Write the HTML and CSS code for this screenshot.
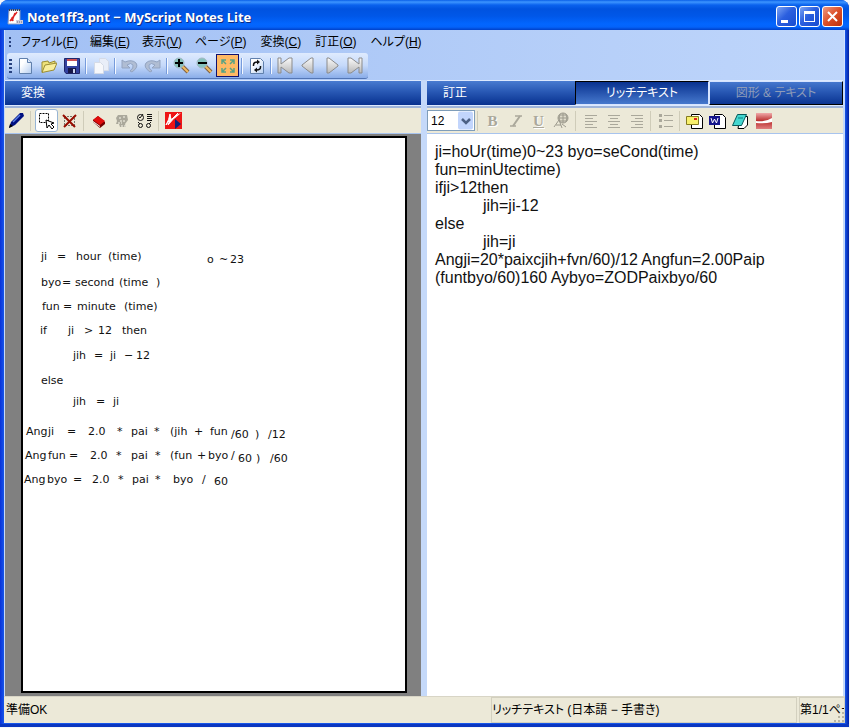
FILE: index.html
```html
<!DOCTYPE html>
<html lang="ja">
<head>
<meta charset="utf-8">
<title>Note1ff3.pnt - MyScript Notes Lite</title>
<link rel="stylesheet" href="styles.css">
</head>
<body>
<div class="window">
  <header class="titlebar">
    <svg class="app-icon" width="16" height="16" viewBox="0 0 16 16"><path d="M2 1h11v14H1z" fill="#fff" stroke="#8a9bc0"/><path d="M2 1h11" stroke="#444" stroke-dasharray="1 1" stroke-width="2"/><path d="M3 12L10 3M5 8l1 4M8 4l-3 8" stroke="#d22" stroke-width="1.5" fill="none"/><path d="M9 11h7v4H9z" fill="#ccd"/><path d="M10 13h5" stroke="#667" stroke-dasharray="1 1"/></svg>
    <h1 class="title">Note1ff3.pnt − MyScript Notes Lite</h1>
    <div class="controls">
      <button class="control" aria-label="最小化"><svg width="19" height="19"><path d="M4 13h7v3H4z" fill="#fff"/></svg></button>
      <button class="control" aria-label="最大化"><svg width="19" height="19"><path d="M4 4h11v11H4zM5 7v7h9V7z" fill="#fff" fill-rule="evenodd"/></svg></button>
      <button class="control close" aria-label="閉じる"><svg width="19" height="19"><path d="M5 5l9 9M14 5l-9 9" stroke="#fff" stroke-width="2"/></svg></button>
    </div>
  </header>

  <nav class="menubar">
    <span class="grip"></span>
    <button class="menu">ファイル(<u>F</u>)</button>
    <button class="menu">編集(<u>E</u>)</button>
    <button class="menu">表示(<u>V</u>)</button>
    <button class="menu">ページ(<u>P</u>)</button>
    <button class="menu">変換(<u>C</u>)</button>
    <button class="menu">訂正(<u>O</u>)</button>
    <button class="menu">ヘルプ(<u>H</u>)</button>
  </nav>

  <div class="toolbar-row">
    <div class="toolbar main-tools">
      <span class="grip"></span>
      <button class="tool" aria-label="新規"><svg width="16" height="16"><defs><linearGradient id="paper" x2="1" y2="1"><stop offset=".3" stop-color="#fff"/><stop offset="1" stop-color="#b4cdf0"/></linearGradient><linearGradient id="metal" x2="0" y2="1"><stop stop-color="#fafafa"/><stop offset="1" stop-color="#b9b9b9"/></linearGradient><linearGradient id="redfade" x2="0" y2="1"><stop stop-color="#f0aaaa"/><stop offset=".5" stop-color="#b92c2c"/><stop offset="1" stop-color="#e08080"/></linearGradient></defs><path d="M1.500.5h8l4 4v11h-12z" fill="url(#paper)" stroke="#6080ad"/><path d="M9.500.5v4h4" fill="#dce8fa" stroke="#6080ad"/></svg></button>
      <button class="tool" aria-label="開く"><svg width="16" height="16"><path d="M1 14V4l6-1 1 2 6-2v4" fill="#eee27a" stroke="#9b8d32"/><path d="M1 14.500L4 7l12-2-3 7z" fill="#f8ee9c" stroke="#9b8d32"/></svg></button>
      <button class="tool" aria-label="保存"><svg width="16" height="16"><path d="M.5.5h15v15H2l-1.500-2z" fill="#3342a0" stroke="#20276b"/><path d="M3 1h10v7H3z" fill="#fff"/><path d="M3 1h10v2H3z" fill="#cf5054"/><path d="M4 10h8v5H4z" fill="#181848"/><path d="M9 11h2v4H9z" fill="#ccd4f0"/></svg></button>
      <span class="sep"></span>
      <button class="tool" aria-label="コピー"><svg width="16" height="16"><path d="M6.500.5h6l3 3v9h-9z" fill="#e9eef8" stroke="#d5dbe7"/><path d="M1.500 4.500h6l3 3v8h-9z" fill="#f7f8fb" stroke="#d5dbe7"/></svg></button>
      <span class="sep"></span>
      <button class="tool" aria-label="元に戻す"><svg width="17" height="16"><path d="M1 2v8h8L6 7q4-3 6 0 1 3-3 6l2 1q7-5 4-9-4-4-11-1z" fill="#b0bdd3" stroke="#92a3c1"/></svg></button>
      <button class="tool" aria-label="やり直し"><svg width="17" height="16"><path d="M16 2v8H8l3-3q-4-3-6 0-1 3 3 6l-2 1Q-1 9 2 5q4-4 11-1z" fill="#b0bdd3" stroke="#92a3c1"/></svg></button>
      <span class="sep"></span>
      <button class="tool" aria-label="拡大"><svg width="17" height="17"><path d="M9 9l6 6" stroke="#806040" stroke-width="4"/><path d="M9 9l6 6" stroke="#f0bb60" stroke-width="2"/><circle cx="6" cy="6" r="5" fill="#86c3bd" stroke="#a3b9c3"/><path d="M6 2v8M2 6h8" stroke="#000" stroke-width="2"/></svg></button>
      <button class="tool" aria-label="縮小"><svg width="17" height="17"><path d="M9 9l6 6" stroke="#806040" stroke-width="4"/><path d="M9 9l6 6" stroke="#f0bb60" stroke-width="2"/><circle cx="6" cy="6" r="5" fill="#86c3bd" stroke="#a3b9c3"/><path d="M2 6h9" stroke="#000" stroke-width="2"/></svg></button>
      <button class="tool checked" aria-label="全体表示"><svg width="16" height="16"><path d="M6 6L2 2m0 4V2h4M10 6l4-4m-4 0h4v4M6 10l-4 4m0-4v4h4M10 10l4 4m-4 0h4v-4" fill="none" stroke="#58a284" stroke-width="1.500"/></svg></button>
      <span class="sep"></span>
      <button class="tool" aria-label="更新"><svg width="16" height="16"><path d="M1.500.5h10l3 3v12h-13z" fill="url(#paper)" stroke="#6080ad"/><path d="M4.500 8V7q0-3 4-3M11.500 8v1q0 3-4 3" fill="none" stroke="#111" stroke-width="1.500"/><path d="M8 1.500l3 2.500-3 2.500zM8 9.500v5l-3-2.500z" fill="#111"/></svg></button>
      <span class="sep"></span>
      <button class="tool" aria-label="先頭"><svg width="17" height="17"><path d="M1 1h3v6l8-6h3v15h-3l-8-6v6H1z" fill="url(#metal)" stroke="#8b8b8b"/></svg></button>
      <button class="tool" aria-label="前へ"><svg width="17" height="17"><path d="M13 1v15h-2L2 9V8l9-7z" fill="url(#metal)" stroke="#8b8b8b"/></svg></button>
      <button class="tool" aria-label="次へ"><svg width="17" height="17"><path d="M4 1v15h2l9-7V8L6 1z" fill="url(#metal)" stroke="#8b8b8b"/></svg></button>
      <button class="tool" aria-label="最後"><svg width="17" height="17"><path d="M16 1h-3v6L5 1H2v15h3l8-6v6h3z" fill="url(#metal)" stroke="#8b8b8b"/></svg></button>
    </div>
  </div>

  <main class="panes">
    <section class="pane">
      <div class="pane-head"><h2 class="pane-title">変換</h2></div>
      <div class="toolbar pane-tools">
        <button class="tool" aria-label="ペン"><svg width="17" height="17"><path d="M1 16l2-6 9-9h3l1 3-9 9z" fill="#001080"/><path d="M5 10l7-7" stroke="#5c82e8" stroke-width="1.500"/><path d="M1 16l1-4 3 2z" fill="#000"/></svg></button>
        <span class="sep wide"></span>
        <button class="tool selected" aria-label="選択"><svg width="17" height="17"><path d="M1.500 1.500h9v9h-9z" fill="none" stroke="#000" stroke-dasharray="2 1"/><path d="M8 8l8 3-3 1 3 3-2 2-3-4-2 3z" fill="#fff" stroke="#000"/></svg></button>
        <button class="tool" aria-label="選択解除"><svg width="16" height="16"><path d="M2.500 3.500h10v9h-10z" fill="none" stroke="#000" stroke-dasharray="1 2"/><path d="M1 2l12 12M14 2L2 14" stroke="#970d00" stroke-width="2"/></svg></button>
        <span class="sep"></span>
        <button class="tool" aria-label="消しゴム"><svg width="16" height="16"><path d="M2 7l5-4 7 6v2l-5 4-7-6z" fill="#700"/><path d="M2 7l5-4 7 5-5 4z" fill="#e00d0d"/><path d="M2 8l7 5v1L2 9z" fill="#fff"/></svg></button>
        <button class="tool" aria-label="認識"><svg width="16" height="16"><path d="M4 2h9l1 5-3 4 1 3H6l-1-3H2l1-3-1-3z" fill="#aaa89b"/><path d="M5 5h2m2-1h3M6 8h6M4 10h4M7 13h5" stroke="#f8f6e9" stroke-dasharray="2 1"/></svg></button>
        <button class="tool" aria-label="一覧"><svg width="17" height="16"><g fill="none" stroke="#111"><circle cx="4.500" cy="4.500" r="3"/><path d="M3 4l1 1 3-4M11 1.500h5M11 3.500h5M11 5.500h5M11 7.500h5"/><circle cx="4.500" cy="12.500" r="2"/><circle cx="12.500" cy="12.500" r="2"/><path d="M2 9l2 2M15 9l-2 2"/></g></svg></button>
        <span class="sep"></span>
        <button class="tool" aria-label="変換実行"><svg width="17" height="17"><path d="M0 0h17v17H0z" fill="#ee1515"/><path d="M1 13Q4 8 5 2l1 6 7-7-3 4-7 8 3-7z" fill="#fff" stroke="#fff"/><path d="M16 1l-5 2-2 4z" fill="#fff"/><path d="M10 7l6 5-6 5z" fill="#102078"/></svg></button>
      </div>
      <div class="desk">
        <svg class="page" role="img" aria-label="手書きノート">
          <g class="ink" transform="translate(-23 -138)">
            <text y="260"><tspan x="41">ji</tspan> <tspan x="57">=</tspan> <tspan x="76">hour</tspan> <tspan x="108">(time)</tspan></text>
            <text y="263"><tspan x="207">o</tspan> <tspan x="219">~</tspan><tspan x="230">23</tspan></text>
            <text y="286"><tspan x="41">byo</tspan> <tspan x="62">=</tspan> <tspan x="75">second</tspan> <tspan x="119">(time</tspan> <tspan x="156">)</tspan></text>
            <text y="310"><tspan x="42">fun</tspan> <tspan x="63">=</tspan> <tspan x="77">minute</tspan> <tspan x="124">(time)</tspan></text>
            <text y="334"><tspan x="40">if</tspan> <tspan x="68">ji</tspan> <tspan x="84">&gt;</tspan> <tspan x="98">12</tspan> <tspan x="122">then</tspan></text>
            <text y="359"><tspan x="73">jih</tspan> <tspan x="94">=</tspan> <tspan x="110">ji</tspan> <tspan x="124">−</tspan> <tspan x="136">12</tspan></text>
            <text y="384"><tspan x="41">else</tspan></text>
            <text y="405"><tspan x="73">jih</tspan> <tspan x="96">=</tspan> <tspan x="113">ji</tspan></text>
            <text y="435"><tspan x="26">Ang</tspan><tspan x="48">ji</tspan> <tspan x="67">=</tspan> <tspan x="88">2.0</tspan> <tspan x="117">*</tspan> <tspan x="131">pai</tspan> <tspan x="154">*</tspan> <tspan x="170">(jih</tspan> <tspan x="194">+</tspan> <tspan x="210">fun</tspan> <tspan x="231" y="438">/60</tspan> <tspan x="255">)</tspan> <tspan x="268">/12</tspan></text>
            <text y="459"><tspan x="25">Ang</tspan> <tspan x="48">fun</tspan> <tspan x="69">=</tspan> <tspan x="90">2.0</tspan> <tspan x="116">*</tspan> <tspan x="131">pai</tspan> <tspan x="155">*</tspan> <tspan x="170">(fun</tspan> <tspan x="197">+</tspan><tspan x="208">byo</tspan> <tspan x="231">/</tspan> <tspan x="238" y="462">60</tspan> <tspan x="256">)</tspan> <tspan x="270">/60</tspan></text>
            <text y="483"><tspan x="24">Ang</tspan> <tspan x="47">byo</tspan> <tspan x="73">=</tspan> <tspan x="92">2.0</tspan> <tspan x="118">*</tspan> <tspan x="132">pai</tspan> <tspan x="155">*</tspan> <tspan x="173">byo</tspan> <tspan x="202">/</tspan> <tspan x="214" y="485">60</tspan></text>
          </g>
        </svg>
      </div>
    </section>

    <section class="pane">
      <div class="pane-head split">
        <button class="pane-title tab">訂正</button>
        <button class="tab active">リッチテキスト</button>
        <button class="tab off" disabled>図形 &amp; テキスト</button>
      </div>
      <div class="toolbar pane-tools">
        <select class="size" aria-label="文字サイズ"><option>12</option></select>
        <span class="sep"></span>
        <button class="tool letter" aria-label="太字"><b>B</b></button>
        <button class="tool" aria-label="斜体"><svg width="16" height="16"><path d="M7 3h7M2 13h6" stroke="#aaa89b" stroke-width="1.500"/><path d="M12 3L5 13" stroke="#aaa89b" stroke-width="2"/></svg></button>
        <button class="tool letter" aria-label="下線"><u>U</u></button>
        <button class="tool" aria-label="色"><svg width="17" height="17"><circle cx="10" cy="6" r="5" fill="#dedbca" stroke="#9c9a8d"/><path d="M10 1v10M5 6h10M7 2q-2 4 0 8M13 2q2 4 0 8M7 3h6M7 9h6M1 15l5-7 3 8M3 13h5M9 12l4 3" fill="none" stroke="#9c9a8d"/></svg></button>
        <span class="sep"></span>
        <button class="tool" aria-label="左揃え"><svg width="16" height="16"><path d="M2 2.500h12M2 5.500h8M2 8.500h12M2 11.500h8M2 14.500h12" stroke="#aaa89b"/></svg></button>
        <button class="tool" aria-label="中央揃え"><svg width="16" height="16"><path d="M2 2.500h12M4 5.500h8M2 8.500h12M4 11.500h8M2 14.500h12" stroke="#aaa89b"/></svg></button>
        <button class="tool" aria-label="右揃え"><svg width="16" height="16"><path d="M2 2.500h12M6 5.500h8M2 8.500h12M6 11.500h8M2 14.500h12" stroke="#aaa89b"/></svg></button>
        <span class="sep"></span>
        <button class="tool" aria-label="箇条書き"><svg width="16" height="16"><path d="M1 1h3v3H1zM1 6h3v3H1zM1 12h3v3H1zM6 2h9v1H6zM6 7h9v1H6zM6 13h9v1H6z" fill="#aaa89b"/></svg></button>
        <span class="sep"></span>
        <button class="tool" aria-label="メール"><svg width="17" height="16"><path d="M5.500 1.500h8l3 3v11h-11z" fill="#fff" stroke="#000"/><path d="M.5 3.500h12v8H.5z" fill="#f8f06c" stroke="#857c20"/><path d="M8 5h3v2H8z" fill="#e02020"/></svg></button>
        <button class="tool" aria-label="Word"><svg width="17" height="16"><path d="M5.500 1.500h8l3 3v11h-11z" fill="#fff" stroke="#000"/><path d="M0 3h11v9H0z" fill="#15158b"/><path d="M2 5l1.500 5 2-4 2 4L9 5" fill="none" stroke="#fff"/></svg></button>
        <button class="tool" aria-label="メモ帳"><svg width="17" height="16"><path d="M8 3.500h7.500V12L12 15.500H6z" fill="#fff" stroke="#000"/><path d="M5.500 1.500h9l-5 11h-9z" fill="#45d7d0" stroke="#075a5a"/><path d="M6 5h5" stroke="#098080"/></svg></button>
        <button class="tool" aria-label="書き出し"><svg width="16" height="16"><path d="M0 0h16v16H0z" fill="url(#redfade)"/><path d="M0 8q10 1 16-3v4q-7 2-16 1z" fill="#fff"/></svg></button>
      </div>
      <textarea class="editor" aria-label="リッチテキスト" spellcheck="false">ji=hoUr(time)0~23 byo=seCond(time)
fun=minUtectime)
ifji&gt;12then
&#9;jih=ji-12
else
&#9;jih=ji
Angji=20*paixcjih+fvn/60)/12 Angfun=2.00Paip
(funtbyo/60)160 Aybyo=ZODPaixbyo/60</textarea>
    </section>
  </main>

  <footer class="status">
    <span class="cell ready">準備OK</span>
    <span class="cell mode">リッチテキスト (日本語 − 手書き)</span>
    <span class="cell count">第1/1ページ</span>
    <svg class="size-grip" width="12" height="12"><path d="M9 2h2v2H9zM5 6h2v2H5zM9 6h2v2H9zM1 10h2v2H1zM5 10h2v2H5zM9 10h2v2H9z" fill="#b8b4a2"/></svg>
  </footer>
</div>
</body>
</html>
```
FILE: styles.css
```css
* { box-sizing: border-box; }

body {
  margin: 0;
  padding: 0 1px 1px 0;
  background: #f4f6fa;
  font: 12px/16px "Liberation Sans", "Noto Sans CJK JP", sans-serif;
  font-feature-settings: "palt";
  color: #000;
}

button {
  margin: 0;
  padding: 0;
  border: 0;
  background: none;
  color: inherit;
  font: inherit;
  font-feature-settings: inherit;
}

svg { display: block; }
h1, h2 { margin: 0; font-size: inherit; }

.window {
  display: flex;
  flex-direction: column;
  height: calc(100vh - 1px);
  padding: 0 4px 4px;
  border-radius: 8px 8px 0 0;
  overflow: hidden;
  background: linear-gradient(90deg, #0831d9, #1656ea 4px, #1656ea calc(100% - 4px), #001ea0);
  box-shadow: inset 0 -3px 0 #0a36c0;
}

.titlebar {
  display: flex;
  align-items: center;
  flex: none;
  height: 30px;
  margin: 0 -4px;
  padding: 3px 6px 0 7px;
  background: linear-gradient(#0a5fe8, #3d95ff 2px, #0a62ee 5px, #0053e0 9px, #0057e8 16px, #0266ff 24px, #0463fa 27px, #0040c8);
}

.title {
  flex: 1;
  margin-left: 4px;
  color: #fff;
  font: bold 13px/16px "Noto Sans", sans-serif;
  text-shadow: 1px 1px 0 #0b2b86;
}

.controls { display: flex; gap: 2px; }

.control {
  width: 21px;
  height: 21px;
  border: 1px solid #fff;
  border-radius: 3px;
  background: linear-gradient(135deg, #7ca4f4, #2b5fdf 45%, #174bd0);
}

.close { background: linear-gradient(135deg, #ee9a82, #dc4e27 50%, #bd310c); }

.menubar, .toolbar-row {
  flex: none;
  border: solid #cfe0ff;
  border-width: 0 1px;
  background: linear-gradient(90deg, #a2c0f4, #bfd6fb);
}

.menubar {
  display: flex;
  align-items: center;
  height: 23px;
  padding-left: 4px;
}

.menu { height: 20px; padding: 0 6px; white-space: nowrap; }
.menu:first-of-type { margin-left: 4px; }
.menu:nth-of-type(n+4) { padding: 0 7px; }

.grip {
  flex: none;
  width: 3px;
  height: 14px;
  background: repeating-linear-gradient(#27417f 0 2px, transparent 2px 4px);
}

.menubar .grip { height: 10px; width: 2px; }

.toolbar-row { height: 27px; padding-left: 2px; }
.toolbar { display: flex; align-items: center; }

.main-tools {
  width: fit-content;
  height: 26px;
  padding: 0 2px;
  border-bottom: 1px solid #5275b5;
  border-radius: 3px;
  background: linear-gradient(#dfebfe, #c5d9fa 50%, #8aade9);
}

.main-tools .grip { margin-right: 2px; }

.tool {
  display: grid;
  place-items: center;
  flex: none;
  width: 23px;
  height: 23px;
}

.checked { border: 1px solid #10106f; background: #ffb964; }
.selected { border: 1px solid #98b5d4; border-radius: 3px; background: #fff; }

.sep {
  flex: none;
  width: 6px;
  height: 16px;
  background: linear-gradient(90deg, transparent 2px, #769bdc 2px 3px, #f5f9ff 3px 4px, transparent 4px);
}

.pane-tools .sep {
  height: 20px;
  background: linear-gradient(90deg, transparent 2px, #cfccb9 2px 3px, transparent 3px);
}

.pane-tools .wide { width: 7px; }

.panes {
  display: grid;
  grid-template-columns: 1fr 1fr;
  gap: 6px;
  flex: 1;
  min-height: 0;
  padding: 0 2px 0 1px;
  background: #c5d9f9;
}

.pane { display: flex; flex-direction: column; min-width: 0; }

.pane-head {
  display: flex;
  align-items: center;
  flex: none;
  height: 26px;
  border: solid #dce9ff;
  border-width: 1px 0;
  background: linear-gradient(#497bd0, #2858b4 45%, #08318f);
  color: #fff;
}

.pane-title { padding-left: 16px; font-weight: normal; text-align: left; }
.split { display: grid; grid-template-columns: 148fr 134fr 134fr; }

.tab { height: 24px; }

.active {
  border: 1px solid #d6e4ff;
  border-top-color: #000;
  border-left-color: #000;
  background: linear-gradient(#08318f, #4678cd);
}

.off {
  border: 1px solid #000;
  border-top-color: #d6e4ff;
  border-left-color: #d6e4ff;
  color: #8e9cb8;
}

.pane-tools {
  flex: none;
  height: 28px;
  border-top: 2px solid #9eb4da;
  border-bottom: 1px solid #a8c4ee;
  background: #ece9d8;
}

.letter {
  color: #aaa89b;
  font: bold 15px/20px "Liberation Serif", serif;
  text-shadow: 1px 1px 0 #fff;
}

.size {
  width: 48px;
  height: 21px;
  padding: 0 0 0 3px;
  border: 1px solid #7f9db9;
  border-radius: 0;
  appearance: none;
  background: url("data:image/svg+xml,%3Csvg xmlns='http://www.w3.org/2000/svg' width='16' height='19'%3E%3Crect width='15' height='18' y='.5' rx='2' fill='%23c2d5fc'/%3E%3Cpath d='M4 8l4 4 4-4' fill='none' stroke='%234d6185' stroke-width='2.500'/%3E%3C/svg%3E") right center no-repeat #fff;
  color: #000;
  font: 12px/16px "Liberation Sans", sans-serif;
}

.desk {
  display: flex;
  flex: 1;
  min-height: 0;
  padding: 2px 14px 3px 16px;
  background: #808080;
}

.page {
  flex: 1;
  min-width: 0;
  height: 100%;
  border: 2px solid #000;
  background: #fff;
}

.ink { font: 11px "DejaVu Sans", sans-serif; fill: #111; }

.editor {
  flex: 1;
  width: 100%;
  min-height: 0;
  margin: 0;
  padding: 9px 8px;
  border: 0;
  outline: 0;
  resize: none;
  background: #fff;
  color: #111;
  font: 16px/18px "Liberation Sans", sans-serif;
  font-feature-settings: normal;
  tab-size: 48px;
  white-space: pre;
  overflow: hidden;
}

.status {
  position: relative;
  display: grid;
  grid-template-columns: 1fr 308px 46px;
  flex: none;
  height: 27px;
  border-top: 1px solid #d8d5c6;
  background: #ece9d8;
}

.cell {
  overflow: hidden;
  padding: 5px 2px;
  white-space: nowrap;
}

.mode, .count { margin-right: 2px; border: 1px solid #d3d0bf; padding: 4px 0; }
.count { margin-right: 0; }

.size-grip { position: absolute; right: 0; bottom: 1px; }
```
